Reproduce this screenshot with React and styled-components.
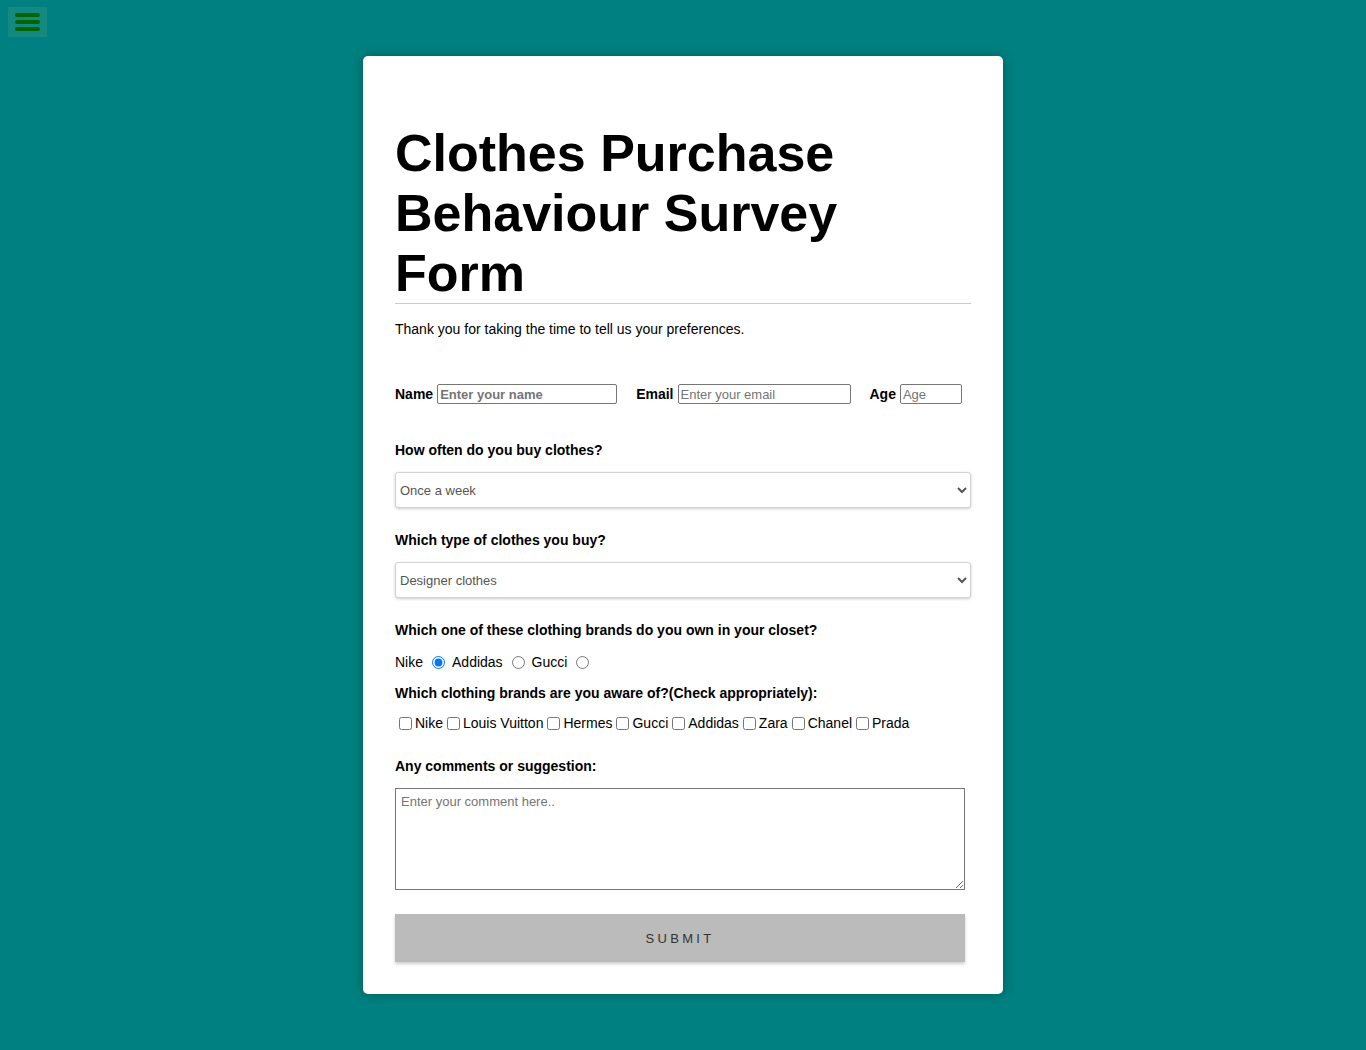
import React from "react";
import styled, { createGlobalStyle } from "styled-components";

const GlobalStyle = createGlobalStyle`
  html, body {
    margin: 0;
    padding: 0;
    background-color: #008080;
    font-family: "Liberation Sans", Arial, sans-serif;
  }
  * {
    box-sizing: border-box;
  }
`;

const Page = styled.div`
  display: flex;
  justify-content: center;
  padding: 56px 0;
  min-height: 1050px;
`;

const MenuButton = styled.button`
  position: fixed;
  top: 7px;
  left: 8px;
  width: 39px;
  height: 30px;
  padding: 6px 7px;
  border: none;
  background-color: #14897f;
  display: flex;
  flex-direction: column;
  justify-content: space-between;
  cursor: pointer;
`;

const Bar = styled.span`
  display: block;
  height: 4px;
  border-radius: 2px;
  background-color: #006400;
`;

const Card = styled.form`
  width: 640px;
  background-color: #fff;
  border-radius: 5px;
  padding: 32px;
  box-shadow: 0 0 12px rgba(0, 0, 0, 0.3);
`;

const Title = styled.h1`
  margin: 35px 0 0;
  font-size: 52px;
  line-height: 60px;
  font-weight: bold;
  color: #000;
  border-bottom: 1px solid #ccc;
  padding-right: 120px;
`;

const Intro = styled.p`
  margin: 17px 0 0;
  font-size: 14px;
  line-height: 16px;
  color: #000;
`;

const InfoRow = styled.div`
  display: flex;
  align-items: center;
  height: 20px;
  margin-top: 47px;
`;

const Field = styled.div`
  display: flex;
  align-items: center;
  margin-left: ${(p) => (p.first ? "0" : "19px")};
`;

const FieldLabel = styled.label`
  font-size: 14px;
  font-weight: bold;
  margin-right: 4px;
`;

const TextInput = styled.input`
  width: ${(p) => p.w}px;
  height: 20px;
  padding: 1px 2px;
  border: 1px solid #767676;
  border-radius: 2px;
  font-family: "Liberation Sans", Arial, sans-serif;
  font-size: 13px;
  font-weight: ${(p) => (p.bold ? "bold" : "normal")};
  &::placeholder {
    color: #757575;
  }
`;

const Question = styled.label`
  display: block;
  font-size: 14px;
  line-height: 16px;
  font-weight: bold;
  color: #000;
  margin-top: ${(p) => p.mt}px;
`;

const Select = styled.select`
  display: block;
  width: 100%;
  height: 36px;
  margin-top: 14px;
  padding: 0;
  border: 1px solid #d3d3d3;
  border-radius: 3px;
  background-color: #fff;
  box-shadow: 0 1px 3px rgba(0, 0, 0, 0.2);
  font-family: "Liberation Sans", Arial, sans-serif;
  font-size: 13px;
  color: #555;
`;

const OptionRow = styled.div`
  display: flex;
  align-items: center;
  height: 20px;
  margin-top: ${(p) => p.mt}px;
  font-size: 14px;
  color: #000;
`;

const Radio = styled.input.attrs({ type: "radio" })`
  width: 13px;
  height: 13px;
  margin: 0 7px 0 9px;
`;

const Check = styled.input.attrs({ type: "checkbox" })`
  width: 13px;
  height: 13px;
  margin: 1px 3px 0 4px;
`;

const Comment = styled.textarea`
  display: block;
  width: 570px;
  height: 102px;
  margin-top: 14px;
  padding: 5px;
  border: 1px solid #767676;
  font-family: "Liberation Sans", Arial, sans-serif;
  font-size: 13px;
  &::placeholder {
    color: #757575;
  }
`;

const Submit = styled.button`
  display: block;
  width: 570px;
  height: 48px;
  margin-top: 24px;
  border: none;
  background-color: #bbb;
  box-shadow: 0 2px 3px rgba(0, 0, 0, 0.2);
  font-family: "Liberation Sans", Arial, sans-serif;
  font-size: 13px;
  letter-spacing: 3.3px;
  color: #333;
  padding-left: 6px;
  cursor: pointer;
`;

const awareBrands = [
  "Nike",
  "Louis Vuitton",
  "Hermes",
  "Gucci",
  "Addidas",
  "Zara",
  "Chanel",
  "Prada"
];

export default function App() {
  return (
    <>
      <GlobalStyle />
      <MenuButton type="button" aria-label="menu">
        <Bar />
        <Bar />
        <Bar />
      </MenuButton>
      <Page>
        <Card onSubmit={(e) => e.preventDefault()}>
          <Title>Clothes Purchase Behaviour Survey Form</Title>
          <Intro>Thank you for taking the time to tell us your preferences.</Intro>

          <InfoRow>
            <Field first>
              <FieldLabel htmlFor="name">Name</FieldLabel>
              <TextInput id="name" w={180} bold placeholder="Enter your name" />
            </Field>
            <Field>
              <FieldLabel htmlFor="email">Email</FieldLabel>
              <TextInput id="email" type="email" w={173} placeholder="Enter your email" />
            </Field>
            <Field>
              <FieldLabel htmlFor="age">Age</FieldLabel>
              <TextInput id="age" w={62} placeholder="Age" />
            </Field>
          </InfoRow>

          <Question mt={38} htmlFor="often">How often do you buy clothes?</Question>
          <Select id="often" defaultValue="week">
            <option value="week">Once a week</option>
            <option value="month">Once a month</option>
            <option value="year">Once a year</option>
          </Select>

          <Question mt={24} htmlFor="type">Which type of clothes you buy?</Question>
          <Select id="type" defaultValue="designer">
            <option value="designer">Designer clothes</option>
            <option value="casual">Casual clothes</option>
            <option value="sports">Sports clothes</option>
          </Select>

          <Question mt={24}>Which one of these clothing brands do you own in your closet?</Question>
          <OptionRow mt={14}>
            Nike
            <Radio name="own" value="nike" defaultChecked />
            Addidas
            <Radio name="own" value="addidas" />
            Gucci
            <Radio name="own" value="gucci" />
          </OptionRow>

          <Question mt={13}>Which clothing brands are you aware of?(Check appropriately):</Question>
          <OptionRow mt={12}>
            {awareBrands.map((b) => (
              <React.Fragment key={b}>
                <Check value={b} />
                {b}
              </React.Fragment>
            ))}
          </OptionRow>

          <Question mt={25} htmlFor="comment">Any comments or suggestion:</Question>
          <Comment id="comment" placeholder="Enter your comment here.." />

          <Submit type="submit">SUBMIT</Submit>
        </Card>
      </Page>
    </>
  );
}
